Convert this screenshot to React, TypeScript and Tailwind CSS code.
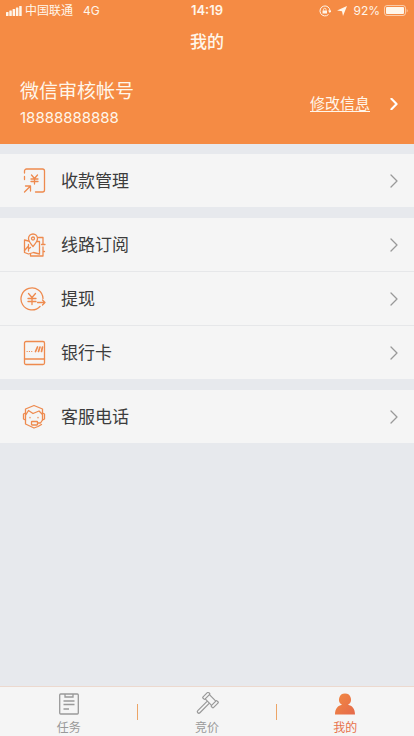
import type { ReactNode } from "react";

const menuGroups = [
  [{ label: "收款管理", icon: <CollectIcon /> }],
  [
    { label: "线路订阅", icon: <RouteIcon /> },
    { label: "提现", icon: <WithdrawIcon /> },
    { label: "银行卡", icon: <CardIcon /> },
  ],
  [{ label: "客服电话", icon: <ServiceIcon /> }],
];

function MenuIcon({ children }: { children: ReactNode }) {
  return (
    <svg
      className="size-7 shrink-0"
      viewBox="0 0 28 28"
      fill="none"
      stroke="#ee8a4e"
      strokeWidth="1.3"
      strokeLinecap="round"
      strokeLinejoin="round"
    >
      {children}
    </svg>
  );
}

function CollectIcon() {
  return (
    <MenuIcon>
      <path d="M4.500 6V4a2 2 0 0 1 2-2h16a2 2 0 0 1 2 2v19a2 2 0 0 1-2 2H15.500M4.500 9.500v3" />
      <path d="M4.500 25l6-6M5.500 19h5v5" />
      <path d="M11.500 8l3 3.500 3-3.500M14.500 11.500v5.500M11 12h7M11 14.500h7" />
    </MenuIcon>
  );
}

function RouteIcon() {
  return (
    <MenuIcon>
      <path d="M13 15.500c-3-3.500-4.500-5.700-4.500-8a4.500 4.500 0 0 1 9 0c0 2.300-1.500 4.500-4.500 8z" />
      <circle cx="13" cy="7.500" r="1.500" />
      <path d="M8.500 10l-4-1v12.500l4 1.500 5-1.500 6 1.500V10.500h-2.500" />
      <path d="M4.500 19.500l4-4.500M8.500 13.500V20M8.500 18l2-1.500" />
      <path d="M18.500 6.500h4.500v7M23 16v9H10.500v-2M21.500 13.500h3.500M23 20.500h1.500" />
    </MenuIcon>
  );
}

function WithdrawIcon() {
  return (
    <MenuIcon>
      <path d="M20 21.500A11 11 0 1 1 23 13.500" />
      <path d="M8.500 8.500l3.500 4 3.500-4M12 12.500v7M8 13.500h8M8 16.500h8" />
      <path d="M17.500 17.500H25M22.500 15l2.500 2.500-2.500 2.500" />
    </MenuIcon>
  );
}

function CardIcon() {
  return (
    <MenuIcon>
      <rect x="4.500" y="2.500" width="20" height="23" rx="1.500" />
      <path d="M4.500 20h20" />
      <path d="M7 12.500h.3M9.300 12.500h.3M11.600 12.500h.3" strokeWidth="1" />
      <path d="M17.500 8l-2 4.500M20 8l-1.500 4.500M22.500 8l-1 4.500" strokeWidth="1.700" />
    </MenuIcon>
  );
}

function ServiceIcon() {
  return (
    <MenuIcon>
      <path d="M5.500 10V6L14 2.500 22.500 6v4M5.500 17v4l8.500 4 4-1.500 3.500-2" />
      <path d="M5.500 10l-2 1v5l2 1zM22.500 10l2 1v5l-2 1z" />
      <path d="M6 11.500L8.500 7.500l4.500 3 6-2.500 3 3" />
      <path d="M10 14.500v.3M18 14.500v.3" />
      <rect x="11.500" y="18.500" width="6" height="3.500" rx=".5" />
      <path d="M17.500 20h3l2-3" />
    </MenuIcon>
  );
}

function Chevron({ className }: { className: string }) {
  return (
    <svg
      className={className}
      viewBox="0 0 8 14"
      fill="none"
      stroke="currentColor"
      strokeLinecap="round"
      strokeLinejoin="round"
    >
      <path d="M1 1l6 6-6 6" />
    </svg>
  );
}

function StatusBar() {
  return (
    <div className="grid h-5 grid-cols-[1fr_auto_1fr] items-center px-1.5 pt-0.5 text-xs">
      <div className="flex items-center">
        <svg className="mr-[3px] h-2.5 w-4" viewBox="0 0 16 10" fill="currentColor">
          <rect x="0" y="6" width="2.500" height="4" rx=".5" />
          <rect x="3.300" y="4.500" width="2.500" height="5.500" rx=".5" />
          <rect x="6.600" y="3" width="2.500" height="7" rx=".5" />
          <rect x="9.900" y="1.500" width="2.500" height="8.500" rx=".5" />
          <rect x="13.200" y="0" width="2.500" height="10" rx=".5" />
        </svg>
        <span>中国联通</span>
        <span className="ml-2.5">4G</span>
      </div>
      <span className="text-[13px] font-semibold">14:19</span>
      <div className="flex items-center justify-end">
        <svg
          className="mr-1.5 size-3"
          viewBox="0 0 12 12"
          fill="none"
          stroke="currentColor"
        >
          <path d="M9.500 9.500A5 5 0 1 1 11 6" />
          <path d="M9 5.500h3.500L10.800 8z" fill="currentColor" stroke="none" />
          <rect x="3.500" y="5.500" width="4.500" height="3" fill="currentColor" stroke="none" />
          <path d="M4.500 5.500V4.500a1.200 1.200 0 0 1 2.500 0v1" strokeWidth=".8" />
        </svg>
        <svg className="mr-1.5 size-2.5" viewBox="0 0 10 10" fill="currentColor">
          <path d="M10 0L6 10 5 5.200 0 4.500z" />
        </svg>
        <span>92%</span>
        <svg className="ml-1 h-3 w-6" viewBox="0 0 24 12" fill="none">
          <rect x=".5" y=".5" width="21" height="10" rx="2.500" stroke="currentColor" strokeOpacity=".6" />
          <rect x="2" y="2" width="18" height="7" rx="1" fill="currentColor" />
          <path d="M22.700 4v3.500c1.300-.7 1.300-2.800 0-3.500z" fill="currentColor" fillOpacity=".6" />
        </svg>
      </div>
    </div>
  );
}

function Header() {
  return (
    <header className="bg-[#f58b44] text-[#fff6ea]">
      <StatusBar />
      <h1 className="flex h-11 items-center justify-center pt-0.5 text-[17px] font-medium">
        我的
      </h1>
      <div className="flex h-20 items-center justify-between pr-4 pl-5">
        <div>
          <p className="text-[19px] leading-7">微信审核帐号</p>
          <p className="text-[15px] leading-6">18888888888</p>
        </div>
        <a href="#profile" className="flex items-center gap-5 text-[15px]">
          <span className="underline underline-offset-2">修改信息</span>
          <Chevron className="h-3 w-2 stroke-[2.5] text-white" />
        </a>
      </div>
    </header>
  );
}

function Menu() {
  return (
    <main className="flex flex-1 flex-col gap-[11px] pt-2.5">
      {menuGroups.map((group) => (
        <ul key={group[0].label} className="divide-y divide-[#e6e7e9] bg-[#f5f5f5]">
          {group.map((item) => (
            <li key={item.label}>
              <button
                type="button"
                className="flex h-[53px] w-full items-center pr-4 pl-5 text-[17px] text-[#3c3c3c]"
              >
                {item.icon}
                <span className="ml-[13px] flex-1 pt-0.5 text-left">{item.label}</span>
                <Chevron className="h-3.5 w-2 stroke-[1.3] text-[#999]" />
              </button>
            </li>
          ))}
        </ul>
      ))}
    </main>
  );
}

function TabBar() {
  return (
    <nav className="flex h-[50px] items-center border-t border-[#ecd9cf] bg-[#f5f5f5] text-xs leading-4 text-[#999]">
      <button type="button" className="flex flex-1 flex-col items-center gap-1 pt-1">
        <svg className="h-6 w-5" viewBox="0 0 20 24" fill="none" stroke="currentColor" strokeWidth="1.300">
          <rect x=".7" y="2" width="18.600" height="20" rx="1" />
          <path d="M6 2v3h8V2M4.500 9h11M4.500 12.500h11M4.500 17h5.500" />
        </svg>
        任务
      </button>
      <i className="h-4 w-px bg-[#eca567]" />
      <button type="button" className="flex flex-1 flex-col items-center gap-1 pt-1">
        <svg className="size-6" viewBox="0 0 24 24" fill="none" stroke="currentColor" strokeWidth="1.200" strokeLinejoin="round">
          <g transform="translate(15.500 8) rotate(45)">
            <rect x="-7.500" y="-4" width="3" height="8" rx="1" />
            <rect x="4.500" y="-4" width="3" height="8" rx="1" />
            <path d="M-4.500-3h9M-4.500 3h9M-1.500 3v13.500a1.500 1.500 0 0 0 3 0V3" />
          </g>
        </svg>
        竞价
      </button>
      <i className="h-4 w-px bg-[#eca567]" />
      <button
        type="button"
        aria-current="page"
        className="flex flex-1 flex-col items-center gap-1 pt-1 text-[#e8704a]"
      >
        <svg className="h-6 w-5" viewBox="0 0 20 24">
          <defs>
            <linearGradient id="person" x1="0" y1="0" x2="1" y2="1">
              <stop offset="0" stopColor="#f28a42" />
              <stop offset="1" stopColor="#e56a4b" />
            </linearGradient>
          </defs>
          <path
            d="M10 1.500a6 6 0 0 1 3 11.200c4 .8 7 3.800 7 9.800H0c0-6 3-9 7-9.800A6 6 0 0 1 10 1.500z"
            fill="url(#person)"
          />
        </svg>
        我的
      </button>
    </nav>
  );
}

export default function App() {
  return (
    <div className="flex min-h-screen flex-col bg-[#e7e9ed] font-[Inter,'Noto_Sans_CJK_SC',sans-serif]">
      <Header />
      <Menu />
      <TabBar />
    </div>
  );
}
